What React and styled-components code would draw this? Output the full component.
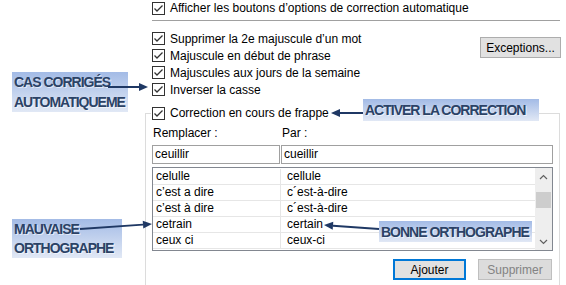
import React from 'react';
import styled, { createGlobalStyle } from 'styled-components';

const GlobalStyle = createGlobalStyle`
  html, body {
    margin: 0;
    padding: 0;
    background: #ffffff;
  }
  body {
    font-family: "Liberation Sans", Arial, sans-serif;
    font-size: 12px;
    color: #000;
  }
`;

const options = [
  'Supprimer la 2e majuscule d\u2019un mot',
  'Majuscule en début de phrase',
  'Majuscules aux jours de la semaine',
  'Inverser la casse',
];

const entries = [
  ['celulle', 'cellule'],
  ['c\u2019est a dire', 'c\u00b4est-à-dire'],
  ['c\u2019est à dire', 'c\u00b4est-à-dire'],
  ['cetrain', 'certain'],
  ['ceux ci', 'ceux-ci'],
];

const callouts = [
  { top: 72, left: 12, width: 116, height: 40, lines: ['CAS CORRIGÉS', 'AUTOMATIQUEME'] },
  { top: 99, left: 363, width: 176, height: 22, lines: ['ACTIVER LA CORRECTION'] },
  { top: 219, left: 12, width: 110, height: 39, lines: ['MAUVAISE', 'ORTHOGRAPHE'] },
  { top: 221, left: 379, width: 153, height: 21, lines: ['BONNE ORTHOGRAPHE'] },
];

// arrows: [fromX, fromY, tipX, tipY]
const arrows = [
  [108, 87, 148, 87],
  [363, 113, 331, 113],
  [80, 229, 152, 224],
  [379, 229, 324, 225],
];

const CheckBox = () => (
  <Check>
    <svg width="11" height="11" viewBox="0 0 11 11">
      <polyline points="1.5,5.5 4,8 9.5,2.5" fill="none" stroke="#333" strokeWidth="1.3" />
    </svg>
  </Check>
);

const Arrow = ({ from, to }) => {
  const [x1, y1] = from;
  const [x2, y2] = to;
  const a = Math.atan2(y2 - y1, x2 - x1);
  const len = 9;
  const half = 4;
  const bx = x2 - Math.cos(a) * len;
  const by = y2 - Math.sin(a) * len;
  const px = -Math.sin(a) * half;
  const py = Math.cos(a) * half;
  return (
    <g>
      <line x1={x1} y1={y1} x2={bx} y2={by} stroke="#1f3864" strokeWidth="2" />
      <polygon
        points={`${x2},${y2} ${bx + px},${by + py} ${bx - px},${by - py}`}
        fill="#1f3864"
      />
    </g>
  );
};

const App = () => {
  return (
    <>
      <GlobalStyle />
      <Page>
        <Dialog>
          <TopOption>
            <CheckRow $height={16}>
              <CheckBox />
              <span>Afficher les boutons d’options de correction automatique</span>
            </CheckRow>
          </TopOption>
          <Separator />
          <OptionsBlock>
            <div>
              {options.map((label) => (
                <CheckRow key={label} $height={17}>
                  <CheckBox />
                  <span>{label}</span>
                </CheckRow>
              ))}
            </div>
            <Button $width={81} $margin="7px -1px 0 0">Exceptions...</Button>
          </OptionsBlock>
          <Group>
            <Legend>
              <CheckRow $height={16}>
                <CheckBox />
                <span>Correction en cours de frappe</span>
              </CheckRow>
            </Legend>
            <Fields>
              <FieldLabel>Remplacer :</FieldLabel>
              <FieldLabel>Par :</FieldLabel>
              <TextBox>ceuillir</TextBox>
              <TextBox>cueillir</TextBox>
            </Fields>
            <List>
              <ListBody>
                {entries.map(([wrong, right]) => (
                  <ListRow key={wrong}>
                    <Cell $first>{wrong}</Cell>
                    <Cell>{right}</Cell>
                  </ListRow>
                ))}
              </ListBody>
              <ScrollBar>
                <ScrollArrow>
                  <svg width="9" height="6" viewBox="0 0 9 6">
                    <polyline points="1,5 4.5,1.5 8,5" fill="none" stroke="#606060" strokeWidth="1.2" />
                  </svg>
                </ScrollArrow>
                <Track>
                  <Thumb />
                </Track>
                <ScrollArrow>
                  <svg width="9" height="6" viewBox="0 0 9 6">
                    <polyline points="1,1 4.5,4.5 8,1" fill="none" stroke="#606060" strokeWidth="1.2" />
                  </svg>
                </ScrollArrow>
              </ScrollBar>
            </List>
            <Actions>
              <Button $width={73} $primary>Ajouter</Button>
              <Button $width={74} $disabled $margin="0 1px 0 0">Supprimer</Button>
            </Actions>
          </Group>
        </Dialog>

        {callouts.map((c) => (
          <Callout key={c.lines[0]} $top={c.top} $left={c.left} $width={c.width} $height={c.height}>
            {c.lines.map((l) => (
              <CalloutLine key={l}>{l}</CalloutLine>
            ))}
          </Callout>
        ))}
        <ArrowLayer width="566" height="285" viewBox="0 0 566 285">
          {arrows.map(([x1, y1, x2, y2], i) => (
            <Arrow key={i} from={[x1, y1]} to={[x2, y2]} />
          ))}
        </ArrowLayer>
      </Page>
    </>
  );
};

const Page = styled.div`
  position: relative;
  width: 566px;
  height: 285px;
  overflow: hidden;
  background: #fff;
`;

const Dialog = styled.div`
  margin-left: 145px;
  width: 415px;
  display: flex;
  flex-direction: column;
`;

const TopOption = styled.div`
  padding-left: 7px;
`;

const CheckRow = styled.div`
  display: flex;
  align-items: center;
  gap: 5px;
  height: ${(p) => p.$height}px;
  white-space: nowrap;
`;

const Check = styled.span`
  box-sizing: border-box;
  width: 13px;
  height: 13px;
  border: 1px solid #333;
  background: #fff;
  display: flex;
  align-items: center;
  justify-content: center;
  flex: none;
`;

const Separator = styled.div`
  margin: 4px 0 9px 7px;
  height: 1px;
  background: #a0a0a0;
`;

const OptionsBlock = styled.div`
  display: flex;
  justify-content: space-between;
  align-items: flex-start;
  padding-left: 7px;
`;

const Button = styled.div`
  box-sizing: border-box;
  width: ${(p) => p.$width}px;
  height: 21px;
  margin: ${(p) => p.$margin || '0'};
  display: flex;
  align-items: center;
  justify-content: center;
  background: ${(p) => (p.$disabled ? '#dcdcdc' : '#e1e1e1')};
  border: ${(p) => (p.$primary ? '2px solid #0078d7' : p.$disabled ? '1px solid #bfbfbf' : '1px solid #adadad')};
  color: ${(p) => (p.$disabled ? '#838383' : '#000')};
`;

const Group = styled.fieldset`
  margin: 7px 0 0 0;
  padding: 0 6px 20px;
  border: 1px solid #dcdcdc;
  min-width: 0;
`;

const Legend = styled.legend`
  padding: 0 3px 0 1px;
  margin-left: -1px;
`;

const Fields = styled.div`
  display: grid;
  grid-template-columns: 128px 1fr;
  column-gap: 1px;
  margin-top: 4px;
`;

const FieldLabel = styled.div`
  height: 16px;
  line-height: 16px;
  padding-left: 1px;
  margin-bottom: 4px;
`;

const TextBox = styled.div`
  box-sizing: border-box;
  height: 19px;
  border: 1px solid #a0a0a0;
  padding-left: 2px;
  line-height: 17px;
`;

const List = styled.div`
  box-sizing: border-box;
  margin-top: 3px;
  height: 84px;
  border: 1px solid #828790;
  display: flex;
`;

const ListBody = styled.div`
  flex: 1;
  padding-top: 1px;
`;

const ListRow = styled.div`
  display: grid;
  grid-template-columns: 128px 1fr;
  height: 16px;
  box-sizing: border-box;
  border-bottom: 1px solid #e6e6e6;
`;

const Cell = styled.div`
  line-height: 15px;
  padding-left: ${(p) => (p.$first ? '3px' : '6px')};
  border-right: ${(p) => (p.$first ? '1px solid #e6e6e6' : 'none')};
  white-space: nowrap;
`;

const ScrollBar = styled.div`
  width: 17px;
  display: flex;
  flex-direction: column;
  background: #eeeeee;
`;

const ScrollArrow = styled.div`
  height: 17px;
  display: flex;
  align-items: center;
  justify-content: center;
`;

const Track = styled.div`
  flex: 1;
  padding: 7px 1px 0;
`;

const Thumb = styled.div`
  height: 16px;
  background: #cdcdcd;
`;

const Actions = styled.div`
  display: flex;
  justify-content: flex-end;
  gap: 12px;
  margin-top: 8px;
`;

const Callout = styled.div`
  position: absolute;
  top: ${(p) => p.$top}px;
  left: ${(p) => p.$left}px;
  width: ${(p) => p.$width}px;
  height: ${(p) => p.$height}px;
  box-sizing: border-box;
  padding-left: 2px;
  display: flex;
  flex-direction: column;
  justify-content: space-around;
  background: linear-gradient(to bottom, #a3bbe6, #e1e8f5);
`;

const CalloutLine = styled.div`
  font-family: "Liberation Sans", Arial, sans-serif;
  font-weight: bold;
  font-size: 14px;
  letter-spacing: -1px;
  color: #2b4266;
  text-shadow: 1px 1px 0 rgba(255, 255, 255, 0.6);
  white-space: nowrap;
  line-height: 16px;
`;

const ArrowLayer = styled.svg`
  position: absolute;
  top: 0;
  left: 0;
  pointer-events: none;
`;

export default App;
